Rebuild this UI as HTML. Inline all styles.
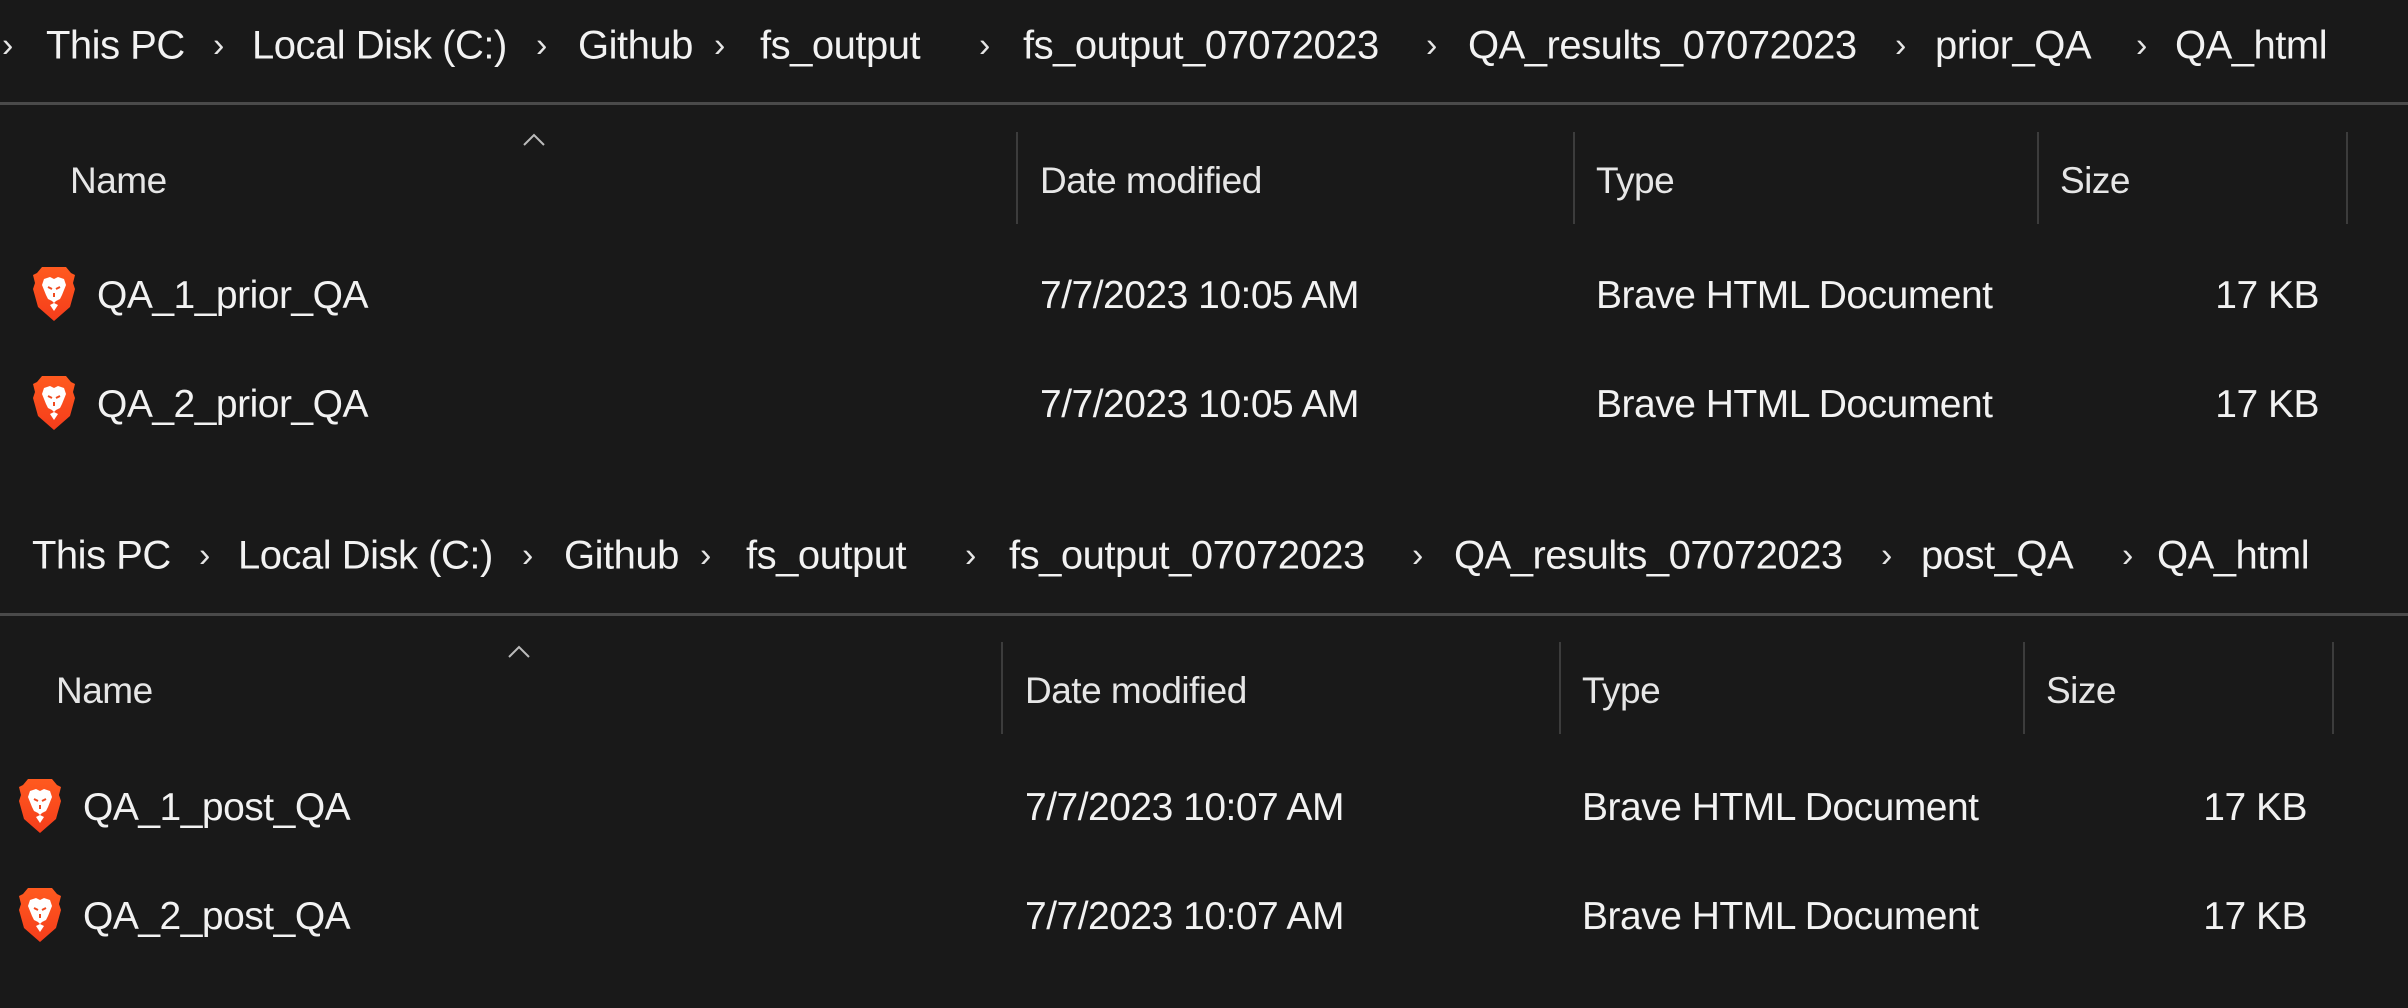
<!DOCTYPE html>
<html><head><meta charset="utf-8"><style>
html,body{margin:0;padding:0;background:#191919;width:2408px;height:1008px;overflow:hidden}
body{position:relative;font-family:"Liberation Sans",sans-serif;color:#f2f2f2}
.t{position:absolute;white-space:nowrap;transform:translateY(-50%);letter-spacing:-0.5px}
.bc{font-size:40px}
.h{font-size:37px;color:#e6e6e6}
.r{font-size:39px}
.sep{position:absolute;font-size:34px;transform:translateY(-50%);color:#e6e6e6}
.line{position:absolute;left:0;width:2408px;height:3px;background:#4a4a4a}
.div{position:absolute;width:2px;background:#3c3c3c}
.ic{position:absolute;width:46px;height:58px}
.caret{position:absolute;width:24px;height:14px}
</style></head><body>
<svg width="0" height="0" style="position:absolute"><defs>
<linearGradient id="g" x1="0" y1="0" x2="0" y2="1"><stop offset="0" stop-color="#ff5a1f"/><stop offset="1" stop-color="#f53d1b"/></linearGradient>
<symbol id="brave" viewBox="0 0 46 58">
<path d="M11 2 L35 2 L40 8 L44 10 L42 18 L44 24 L39 42 L23 56 L7 42 L2 24 L4 18 L2 10 L6 8 Z" fill="url(#g)"/>
<path d="M13 14 L19 12 L23 14 L27 12 L33 14 L35 20 L31 30 L29 34 L25 36 L23 38 L21 36 L17 34 L15 30 L11 20 Z" fill="#fff"/>
<path d="M19 40 L23 38 L27 40 L23 46 Z" fill="#fff"/>
<path d="M17 22 L21 24 M29 22 L25 24 M23 28 L23 32" stroke="#f04a1f" stroke-width="2"/>
</symbol>
<symbol id="car" viewBox="0 0 24 14"><path d="M2 12 L12 2 L22 12" stroke="#bbb" stroke-width="2" fill="none"/></symbol>
</defs></svg>

<!-- TOP PANEL -->
<div class="sep" style="left:2px;top:46px">›</div>
<div class="t bc" style="left:46px;top:46px">This PC</div>
<div class="sep" style="left:213px;top:46px">›</div>
<div class="t bc" style="left:252px;top:46px">Local Disk (C:)</div>
<div class="sep" style="left:536px;top:46px">›</div>
<div class="t bc" style="left:578px;top:46px">Github</div>
<div class="sep" style="left:714px;top:46px">›</div>
<div class="t bc" style="left:760px;top:46px">fs_output</div>
<div class="sep" style="left:979px;top:46px">›</div>
<div class="t bc" style="left:1023px;top:46px">fs_output_07072023</div>
<div class="sep" style="left:1426px;top:46px">›</div>
<div class="t bc" style="left:1468px;top:46px">QA_results_07072023</div>
<div class="sep" style="left:1895px;top:46px">›</div>
<div class="t bc" style="left:1935px;top:46px">prior_QA</div>
<div class="sep" style="left:2136px;top:46px">›</div>
<div class="t bc" style="left:2175px;top:46px">QA_html</div>
<div class="line" style="top:102px"></div>
<svg class="caret" style="left:522px;top:133px"><use href="#car"/></svg>
<div class="t h" style="left:70px;top:181px">Name</div>
<div class="t h" style="left:1040px;top:181px">Date modified</div>
<div class="t h" style="left:1596px;top:181px">Type</div>
<div class="t h" style="left:2060px;top:181px">Size</div>
<div class="div" style="left:1016px;top:132px;height:92px"></div>
<div class="div" style="left:1573px;top:132px;height:92px"></div>
<div class="div" style="left:2037px;top:132px;height:92px"></div>
<div class="div" style="left:2346px;top:132px;height:92px"></div>
<svg class="ic" style="left:31px;top:265px"><use href="#brave"/></svg>
<div class="t r" style="left:97px;top:296px">QA_1_prior_QA</div>
<div class="t r" style="left:1040px;top:296px">7/7/2023 10:05 AM</div>
<div class="t r" style="left:1596px;top:296px">Brave HTML Document</div>
<div class="t r" style="right:89px;top:296px">17 KB</div>
<svg class="ic" style="left:31px;top:374px"><use href="#brave"/></svg>
<div class="t r" style="left:97px;top:405px">QA_2_prior_QA</div>
<div class="t r" style="left:1040px;top:405px">7/7/2023 10:05 AM</div>
<div class="t r" style="left:1596px;top:405px">Brave HTML Document</div>
<div class="t r" style="right:89px;top:405px">17 KB</div>

<!-- BOTTOM PANEL -->
<div class="t bc" style="left:32px;top:556px">This PC</div>
<div class="sep" style="left:199px;top:556px">›</div>
<div class="t bc" style="left:238px;top:556px">Local Disk (C:)</div>
<div class="sep" style="left:522px;top:556px">›</div>
<div class="t bc" style="left:564px;top:556px">Github</div>
<div class="sep" style="left:700px;top:556px">›</div>
<div class="t bc" style="left:746px;top:556px">fs_output</div>
<div class="sep" style="left:965px;top:556px">›</div>
<div class="t bc" style="left:1009px;top:556px">fs_output_07072023</div>
<div class="sep" style="left:1412px;top:556px">›</div>
<div class="t bc" style="left:1454px;top:556px">QA_results_07072023</div>
<div class="sep" style="left:1881px;top:556px">›</div>
<div class="t bc" style="left:1921px;top:556px">post_QA</div>
<div class="sep" style="left:2122px;top:556px">›</div>
<div class="t bc" style="left:2157px;top:556px">QA_html</div>
<div class="line" style="top:613px"></div>
<svg class="caret" style="left:507px;top:645px"><use href="#car"/></svg>
<div class="t h" style="left:56px;top:691px">Name</div>
<div class="t h" style="left:1025px;top:691px">Date modified</div>
<div class="t h" style="left:1582px;top:691px">Type</div>
<div class="t h" style="left:2046px;top:691px">Size</div>
<div class="div" style="left:1001px;top:642px;height:92px"></div>
<div class="div" style="left:1559px;top:642px;height:92px"></div>
<div class="div" style="left:2023px;top:642px;height:92px"></div>
<div class="div" style="left:2332px;top:642px;height:92px"></div>
<svg class="ic" style="left:17px;top:777px"><use href="#brave"/></svg>
<div class="t r" style="left:83px;top:808px">QA_1_post_QA</div>
<div class="t r" style="left:1025px;top:808px">7/7/2023 10:07 AM</div>
<div class="t r" style="left:1582px;top:808px">Brave HTML Document</div>
<div class="t r" style="right:101px;top:808px">17 KB</div>
<svg class="ic" style="left:17px;top:886px"><use href="#brave"/></svg>
<div class="t r" style="left:83px;top:917px">QA_2_post_QA</div>
<div class="t r" style="left:1025px;top:917px">7/7/2023 10:07 AM</div>
<div class="t r" style="left:1582px;top:917px">Brave HTML Document</div>
<div class="t r" style="right:101px;top:917px">17 KB</div>
</body></html>
